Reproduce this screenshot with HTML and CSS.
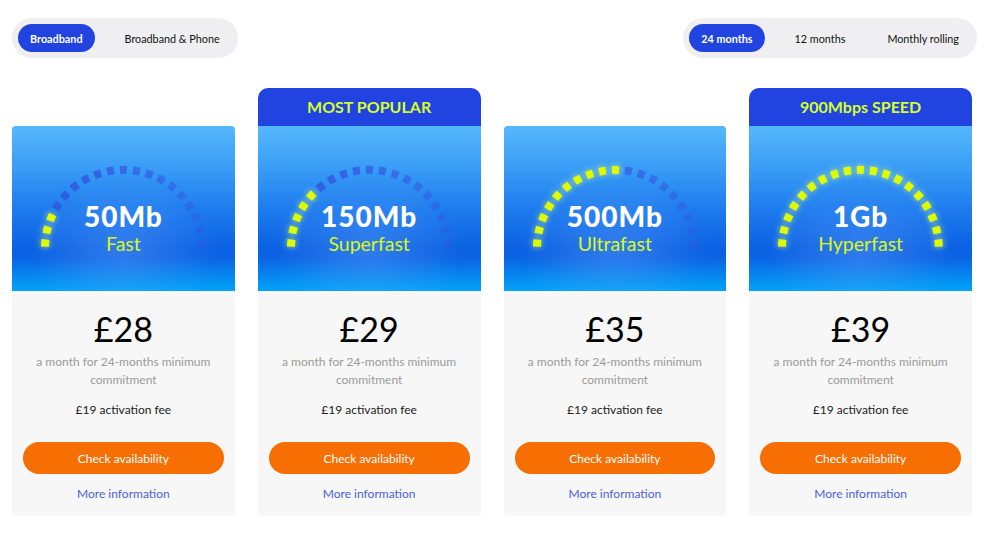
FILE: index.html
```html
<!DOCTYPE html>
<html lang="en">
<head>
    <meta charset="UTF-8">
    <meta name="viewport" content="width=device-width, initial-scale=1.0">
    <title>Broadband deals</title>
    <link rel="stylesheet" href="styles.css">
</head>
<body>
    <div class="page">
        <div class="filters">
            <div class="toggle">
                <button class="toggle-btn active">Broadband</button>
                <button class="toggle-btn">Broadband &amp; Phone</button>
            </div>
            <div class="toggle">
                <button class="toggle-btn active">24 months</button>
                <button class="toggle-btn">12 months</button>
                <button class="toggle-btn">Monthly rolling</button>
            </div>
        </div>

        <div class="deals">
            <!-- 50Mb -->
            <div class="deal">
                <div class="speed">
                    <svg class="gauge" viewBox="0 0 223 165">
                        <defs>
                            <linearGradient id="fade1" gradientUnits="userSpaceOnUse" x1="30" y1="0" x2="192" y2="0">
                                <stop offset="0" stop-color="#3157e0" stop-opacity="0.95"/>
                                <stop offset="1" stop-color="#3157e0" stop-opacity="0.45"/>
                            </linearGradient>
                        </defs>
                        <path class="dash-off" stroke="url(#fade1)" pathLength="190" d="M33.01 123.57 A78.5 78.5 0 1 1 189.99 123.57"/>
                        <path class="dash-on" pathLength="30" d="M33.01 123.57 A78.5 78.5 0 0 1 42.11 85.78"/>
                    </svg>
                    <div class="speed-value">50Mb</div>
                    <div class="speed-name">Fast</div>
                </div>
                <div class="deal-body">
                    <div class="price">£28</div>
                    <p class="terms">a month for 24-months minimum commitment</p>
                    <p class="fee">£19 activation fee</p>
                    <button class="check-btn">Check availability</button>
                    <a class="more" href="#">More information</a>
                </div>
            </div>

            <!-- 150Mb -->
            <div class="deal">
                <div class="badge">MOST POPULAR</div>
                <div class="speed">
                    <svg class="gauge" viewBox="0 0 223 165">
                        <defs>
                            <linearGradient id="fade2" gradientUnits="userSpaceOnUse" x1="30" y1="0" x2="192" y2="0">
                                <stop offset="0" stop-color="#3157e0" stop-opacity="0.95"/>
                                <stop offset="1" stop-color="#3157e0" stop-opacity="0.45"/>
                            </linearGradient>
                        </defs>
                        <path class="dash-off" stroke="url(#fade2)" pathLength="190" d="M33.01 123.57 A78.5 78.5 0 1 1 189.99 123.57"/>
                        <path class="dash-on" pathLength="50" d="M33.01 123.57 A78.5 78.5 0 0 1 57.96 65.09"/>
                    </svg>
                    <div class="speed-value">150Mb</div>
                    <div class="speed-name">Superfast</div>
                </div>
                <div class="deal-body">
                    <div class="price">£29</div>
                    <p class="terms">a month for 24-months minimum commitment</p>
                    <p class="fee">£19 activation fee</p>
                    <button class="check-btn">Check availability</button>
                    <a class="more" href="#">More information</a>
                </div>
            </div>

            <!-- 500Mb -->
            <div class="deal">
                <div class="speed">
                    <svg class="gauge" viewBox="0 0 223 165">
                        <defs>
                            <linearGradient id="fade3" gradientUnits="userSpaceOnUse" x1="30" y1="0" x2="192" y2="0">
                                <stop offset="0" stop-color="#3157e0" stop-opacity="0.95"/>
                                <stop offset="1" stop-color="#3157e0" stop-opacity="0.45"/>
                            </linearGradient>
                        </defs>
                        <path class="dash-off" stroke="url(#fade3)" pathLength="190" d="M33.01 123.57 A78.5 78.5 0 1 1 189.99 123.57"/>
                        <path class="dash-on" pathLength="100" d="M33.01 123.57 A78.5 78.5 0 0 1 118.04 44.27"/>
                    </svg>
                    <div class="speed-value">500Mb</div>
                    <div class="speed-name">Ultrafast</div>
                </div>
                <div class="deal-body">
                    <div class="price">£35</div>
                    <p class="terms">a month for 24-months minimum commitment</p>
                    <p class="fee">£19 activation fee</p>
                    <button class="check-btn">Check availability</button>
                    <a class="more" href="#">More information</a>
                </div>
            </div>

            <!-- 1Gb -->
            <div class="deal">
                <div class="badge">900Mbps SPEED</div>
                <div class="speed">
                    <svg class="gauge" viewBox="0 0 223 165">
                        <path class="dash-on" pathLength="190" d="M33.01 123.57 A78.5 78.5 0 1 1 189.99 123.57"/>
                    </svg>
                    <div class="speed-value">1Gb</div>
                    <div class="speed-name">Hyperfast</div>
                </div>
                <div class="deal-body">
                    <div class="price">£39</div>
                    <p class="terms">a month for 24-months minimum commitment</p>
                    <p class="fee">£19 activation fee</p>
                    <button class="check-btn">Check availability</button>
                    <a class="more" href="#">More information</a>
                </div>
            </div>
        </div>
    </div>
</body>
</html>
```

FILE: styles.css
```css
body {
    margin: 0;
    background-color: #fff;
    font-family: Lato, "Noto Sans", sans-serif;
    color: #111;
}
.page {
    padding: 18px 17px 0 12px;
}
.filters {
    display: flex;
    justify-content: space-between;
}
.toggle {
    display: flex;
    gap: 18px;
    padding: 6px;
    background-color: #efeff2;
    border-radius: 20px;
}
.toggle-btn {
    height: 28px;
    padding: 0 12px;
    border: none;
    border-radius: 14px;
    background: none;
    font-family: inherit;
    font-size: 10.8px;
    color: #111;
    cursor: pointer;
}
.toggle-btn.active {
    background-color: #2143e0;
    color: #fff;
    font-weight: 700;
}
.deals {
    display: grid;
    grid-template-columns: repeat(4, 1fr);
    gap: 23px;
    width: 960px;
    margin-top: 30px;
    align-items: end;
}
.deal {
    display: flex;
    flex-direction: column;
}
.badge {
    height: 38px;
    line-height: 38px;
    text-align: center;
    background-color: #2143e0;
    color: #d6ff2c;
    font-size: 16px;
    font-weight: 700;
    border-radius: 10px 10px 0 0;
}
.speed {
    position: relative;
    height: 165px;
    padding-top: 76px;
    box-sizing: border-box;
    text-align: center;
    border-radius: 4px 4px 0 0;
    background:
        radial-gradient(ellipse 95px 70px at 50% 75%, rgba(120, 170, 255, 0.35), rgba(120, 170, 255, 0) 100%),
        linear-gradient(180deg, #56b8fb 0%, #3a9df6 25%, #1e7cee 50%, #0b61e2 74%, #0a63e3 80%, #0684ee 90%, #02a4f8 100%);
}
.badge + .speed {
    border-radius: 0;
}
.gauge {
    position: absolute;
    left: 0;
    top: 0;
    width: 100%;
    height: 100%;
}
.dash-off,
.dash-on {
    fill: none;
    stroke-width: 8;
    stroke-dasharray: 5.4 4.6;
    stroke-dashoffset: 7.7;
}
.dash-on {
    stroke: #defc00;
    filter: drop-shadow(0 0 3px rgba(210, 255, 140, 0.85));
}
.speed-value {
    position: relative;
    font-size: 28px;
    line-height: 28px;
    font-weight: 900;
    letter-spacing: 1px;
    color: #fff;
}
.speed-name {
    position: relative;
    margin-top: 3px;
    font-size: 19.5px;
    line-height: 22px;
    color: #d8f81c;
}
.deal-body {
    display: flex;
    flex-direction: column;
    align-items: center;
    padding: 18px 11px 13px;
    background-color: #f7f7f7;
    border-radius: 0 0 4px 4px;
    text-align: center;
}
.price {
    font-size: 34px;
    line-height: 40px;
    color: #000;
}
.terms {
    margin: 4px 0 0;
    padding: 0 10px;
    font-size: 12px;
    line-height: 18px;
    color: #9a9a9a;
}
.fee {
    margin: 12px 0 0;
    font-size: 12px;
    line-height: 18px;
    color: #222;
}
.check-btn {
    width: 100%;
    height: 32px;
    margin-top: 23px;
    border: none;
    border-radius: 16px;
    background-color: #f76e02;
    color: #fff;
    font-family: inherit;
    font-size: 12px;
    cursor: pointer;
}
.more {
    margin-top: 11px;
    font-size: 12px;
    line-height: 18px;
    color: #4b5fe0;
    text-decoration: none;
}
```
